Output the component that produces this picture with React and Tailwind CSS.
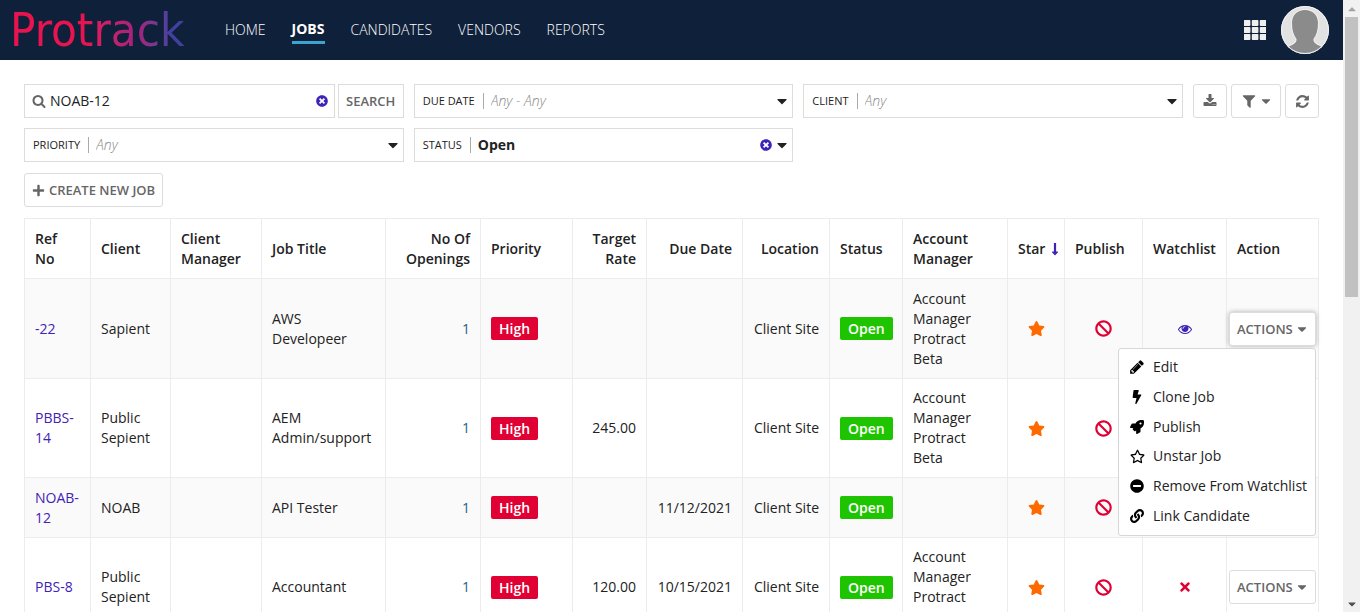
import React from "react";
import {
  FaStar, FaRegStar, FaBan, FaTimes, FaTimesCircle, FaPlus, FaBolt, FaRocket,
  FaMinusCircle, FaLink, FaCaretDown, FaCaretUp, FaLongArrowAltDown,
} from "react-icons/fa";

const glyphs = {
  eye: "M1664 960q-152-236-381-353 61 104 61 225 0 185-131.5 316.5t-316.5 131.5-316.5-131.5-131.5-316.5q0-121 61-225-229 117-381 353 133 205 333.5 326.5t434.5 121.5 434.5-121.5 333.5-326.5zm-720-384q0-20-14-34t-34-14q-125 0-214.5 89.5t-89.5 214.5q0 20 14 34t34 14 34-14 14-34q0-86 61-147t147-61q20 0 34-14t14-34zm848 384q0 34-20 69-140 230-376.5 368.5t-499.5 138.5-499.5-139-376.5-368q-20-35-20-69t20-69q140-229 376.5-368t499.5-139 499.5 139 376.5 368q20 35 20 69z",
  download: "M1344 1344q0-26-19-45t-45-19-45 19-19 45 19 45 45 19 45-19 19-45zm256 0q0-26-19-45t-45-19-45 19-19 45 19 45 45 19 45-19 19-45zm128-224v320q0 40-28 68t-68 28h-1472q-40 0-68-28t-28-68v-320q0-40 28-68t68-28h465l135 136q58 56 136 56t136-56l136-136h464q40 0 68 28t28 68zm-325-569q17 41-14 70l-448 448q-18 19-45 19t-45-19l-448-448q-31-29-14-70 17-39 59-39h256v-448q0-26 19-45t45-19h256q26 0 45 19t19 45v448h256q42 0 59 39z",
  refresh: "M1639 1056q0 5-1 7-64 268-268 434.5t-478 166.5q-146 0-282.5-55t-243.5-157l-129 129q-19 19-45 19t-45-19-19-45v-448q0-26 19-45t45-19h448q26 0 45 19t19 45-19 45l-137 137q71 66 161 102t187 36q134 0 250-65t186-179q11-17 53-117 8-23 30-23h192q13 0 22.5 9.5t9.5 22.5zm25-800v448q0 26-19 45t-45 19h-448q-26 0-45-19t-19-45 19-45l138-138q-148-137-349-137-134 0-250 65t-186 179q-11 17-53 117-8 23-30 23h-199q-13 0-22.5-9.5t-9.5-22.5v-7q65-268 270-434.5t480-166.5q146 0 284 55.5t245 156.5l130-129q19-19 45-19t45 19 19 45z",
  filter: "M1595 295q17 41-14 70l-493 493v742q0 42-39 59-13 5-25 5-27 0-45-19l-256-256q-19-19-19-45v-486l-493-493q-31-29-14-70 17-39 59-39h1280q42 0 59 39z",
  search: "M1216 832q0-185-131.5-316.5t-316.5-131.5-316.5 131.5-131.5 316.5 131.5 316.5 316.5 131.5 316.5-131.5 131.5-316.5zm512 832q0 52-38 90t-90 38q-54 0-90-38l-343-342q-179 124-399 124-143 0-273.5-55.5t-225-150-150-225-55.5-273.5 55.5-273.5 150-225 225-150 273.5-55.5 273.5 55.5 225 150 150 225 55.5 273.5q0 220-124 399l343 343q37 37 37 90z",
  pencil: "M491 1536l91-91-235-235-91 91v107h128v128h107zm523-928q0-22-22-22-10 0-17 7l-542 542q-7 7-7 17 0 22 22 22 10 0 17-7l542-542q7-7 7-17zm-54-192l416 416-832 832h-416v-416zm683 96q0 53-37 90l-166 166-416-416 166-165q36-38 90-38 53 0 91 38l235 234q37 39 37 91z",
};

function Glyph({ name, className }) {
  return (
    <svg viewBox="0 0 1792 1792" fill="currentColor" aria-hidden="true" className={className}>
      <path d={glyphs[name]} />
    </svg>
  );
}

function GridIcon() {
  const cells = [0, 8, 16];
  return (
    <svg viewBox="0 0 22 20" fill="#efefef" className="h-5 w-[22px]" aria-hidden="true">
      {[0, 7, 14].map((y) => cells.map((x) => <rect key={`${x}-${y}`} x={x - 0.2} y={y} width="6.6" height="6" rx="0.8" />))}
    </svg>
  );
}

function Avatar() {
  return (
    <svg viewBox="0 0 48 48" className="size-12" aria-hidden="true">
      <defs>
        <clipPath id="avatar-disc"><circle cx="24" cy="24" r="24" /></clipPath>
      </defs>
      <g clipPath="url(#avatar-disc)">
        <rect width="48" height="48" fill="#e2e2e2" />
        <path d="M24 4C16.500 4 11 9 11 17c0 7 1.500 12 4.500 16 .5 3-2 5-5.500 6.500C8 40.500 6 42 5 44l2 4h34l2-4c-1-2-3-3.500-5-4.500-3.500-1.500-6-3.500-5.500-6.500C35.500 29 37 24 37 17 37 9 31.500 4 24 4z" fill="#8b8b8b" stroke="#f0f0f0" strokeWidth="2" paintOrder="stroke" />
      </g>
      <circle cx="24" cy="24" r="23.500" fill="none" stroke="#f3f3f3" />
    </svg>
  );
}

function Filter({ id, label, value, active }) {
  return (
    <div className="flex h-[34px] items-center border border-[#dcdcdc] bg-white pr-[5px] pl-2">
      <label htmlFor={id} className="mr-[7px] border-r border-[#aaa] pr-2 text-[11px] leading-4 font-medium whitespace-nowrap text-[#222]">
        {label}
      </label>
      <select
        id={id}
        className={`min-w-0 flex-1 appearance-none bg-transparent text-sm leading-5 outline-none ${active ? "font-bold text-[#222]" : "font-light text-[#888] italic"}`}
      >
        <option>{value}</option>
      </select>
      {active && (
        <button type="button" aria-label={`Clear ${label}`} className="mr-[5px] text-[#3f22b8]">
          <FaTimesCircle className="size-3" />
        </button>
      )}
      <FaCaretDown className="h-4 w-[10px] shrink-0 text-[#222]" aria-hidden="true" />
    </div>
  );
}

const toolButton = "flex h-[34px] items-center justify-center rounded-[3px] border border-[#dcdcdc] bg-white text-[#666]";

const columns = [
  ["Ref No", "w-[66px]", "text-left"],
  ["Client", "w-[80px]", "text-left"],
  ["Client Manager", "w-[91px]", "text-left"],
  ["Job Title", "w-[124px]", "text-left"],
  ["No Of Openings", "w-[95px]", "text-right"],
  ["Priority", "w-[92px]", "text-left"],
  ["Target Rate", "w-[74px]", "text-right"],
  ["Due Date", "w-[96px]", "text-right"],
  ["Location", "w-[87px]", "text-right"],
  ["Status", "w-[73px]", "text-left"],
  ["Account Manager", "w-[105px]", "text-left"],
  ["Star", "w-[57px]", "text-left"],
  ["Publish", "w-[78px]", "text-left"],
  ["Watchlist", "w-[84px]", "text-left"],
  ["Action", "w-[92px]", "text-left"],
];

const jobs = [
  { ref: "-22", client: "Sapient", title: "AWS Developeer", rate: "", due: "", manager: "Account Manager Protract Beta", watched: true, open: true },
  { ref: "PBBS-14", client: "Public Sepient", title: "AEM Admin/support", rate: "245.00", due: "", manager: "Account Manager Protract Beta", watched: false },
  { ref: "NOAB-12", client: "NOAB", title: "API Tester", rate: "", due: "11/12/2021", manager: "", watched: false },
  { ref: "PBS-8", client: "Public Sepient", title: "Accountant", rate: "120.00", due: "10/15/2021", manager: "Account Manager Protract Beta", watched: false },
];

const menu = [
  ["Edit", <Glyph name="pencil" className="size-4" />],
  ["Clone Job", <FaBolt className="size-3.5" />],
  ["Publish", <FaRocket className="size-3.5" />],
  ["Unstar Job", <FaRegStar className="size-[15px]" />],
  ["Remove From Watchlist", <FaMinusCircle className="size-3.5" />],
  ["Link Candidate", <FaLink className="size-3.5" />],
];

function ActionMenu() {
  return (
    <div role="menu" className="absolute top-9 right-0 z-10 flex h-[188px] w-[198px] flex-col rounded-[3px] border border-[#d6d6d6] bg-white py-1">
      {menu.map(([label, icon]) => (
        <button key={label} type="button" role="menuitem" className="flex flex-1 items-center gap-2 pl-[10px] text-left text-sm leading-5 whitespace-nowrap text-[#222]">
          <span className="flex w-4 justify-center text-black">{icon}</span>
          {label}
        </button>
      ))}
    </div>
  );
}

const cell = "border border-[#ececec] px-[10px] py-2";

function JobRow({ job }) {
  return (
    <tr className={`odd:bg-[#fafafa] ${job.manager ? "odd:h-[100px] even:h-[99px]" : "h-[60px]"}`}>
      <td className={cell}><a href="#job" className="text-[#3f22b8]">{job.ref}</a></td>
      <td className={cell}>{job.client}</td>
      <td className={cell}></td>
      <td className={cell}>{job.title}</td>
      <td className={`${cell} text-right`}><a href="#openings" className="text-[#1f5f8b]">1</a></td>
      <td className={cell}><span className="inline-block h-[23px] rounded-[2px] bg-[#e00034] px-2 leading-[23px] font-semibold text-white">High</span></td>
      <td className={`${cell} text-right`}>{job.rate}</td>
      <td className={`${cell} text-right`}>{job.due}</td>
      <td className={`${cell} text-right whitespace-nowrap`}>Client Site</td>
      <td className={cell}><span className="inline-block h-[23px] rounded-[2px] bg-[#1fc400] px-2 leading-[23px] font-semibold text-white">Open</span></td>
      <td className={cell}>{job.manager}</td>
      <td className={cell}><FaStar className="mx-auto size-[17px] text-[#ff6a00]" aria-label="Starred" /></td>
      <td className={cell}><FaBan className="mx-auto size-[17px] text-[#e00034]" aria-label="Not published" /></td>
      <td className={cell}>
        {job.watched
          ? <Glyph name="eye" className="mx-auto size-3.5 text-[#3f22b8]" />
          : <FaTimes className="mx-auto size-3.5 text-[#e00034]" aria-label="Not watched" />}
      </td>
      <td className="border border-[#ececec] px-[2px]">
        <div className="relative">
          <button type="button" className={`flex h-[34px] w-full items-center gap-1 rounded-[3px] border border-[#dcdcdc] bg-white pl-[7px] text-[13px] font-semibold text-[#666] ${job.open ? "shadow-[0_0_5px_rgba(0,0,0,0.3)]" : ""}`}>
            ACTIONS
            <FaCaretDown className="h-3.5 w-[10px]" aria-hidden="true" />
          </button>
          {job.open && <ActionMenu />}
        </div>
      </td>
    </tr>
  );
}

export default function App() {
  return (
    <div className="flex h-screen overflow-hidden bg-white font-['Open_Sans',sans-serif] text-sm leading-5 text-[#222]">
      <div className="min-w-0 flex-1 overflow-hidden">
        <header className="flex h-[60px] items-center bg-[#0f203a] pr-[14px] pl-[10px]">
          <a href="#home" className="w-[215px] bg-linear-to-r from-[#e81450] from-35% via-[#a02080] via-60% to-[#42409f] to-75% bg-clip-text font-['DejaVu_Sans_Condensed','DejaVu_Sans',sans-serif] text-[47px] leading-[56px] text-transparent">
            Protrack
          </a>
          <nav className="flex flex-1 items-center gap-[26px] text-white">
            <a href="#home" className="font-light">HOME</a>
            <a href="#jobs" className="border-b-[3px] border-[#3aa6d0] pt-[3px] pb-[2px] font-bold">JOBS</a>
            <a href="#candidates" className="font-light">CANDIDATES</a>
            <a href="#vendors" className="font-light">VENDORS</a>
            <a href="#reports" className="font-light">REPORTS</a>
          </nav>
          <button type="button" aria-label="Apps" className="mr-[15px]"><GridIcon /></button>
          <button type="button" aria-label="Profile"><Avatar /></button>
        </header>

        <main className="px-6 pt-6">
          <form className="flex items-start gap-[10px]" onSubmit={(e) => e.preventDefault()}>
            <div className="grid flex-1 grid-cols-3 gap-[10px]">
              <div className="flex gap-[3px]">
                <div className="flex h-[34px] min-w-0 flex-1 items-center border border-[#dcdcdc] pr-1.5 pl-[7px]">
                  <Glyph name="search" className="mr-1 size-[14px] shrink-0 text-[#666]" />
                  <input type="text" aria-label="Search jobs" defaultValue="NOAB-12" className="min-w-0 flex-1 bg-transparent text-sm outline-none" />
                  <button type="button" aria-label="Clear search" className="text-[#3f22b8]"><FaTimesCircle className="size-3" /></button>
                </div>
                <button type="submit" className="h-[34px] w-[66px] border border-[#dcdcdc] text-[13px] font-semibold text-[#666]">SEARCH</button>
              </div>
              <Filter id="due-date" label="DUE DATE" value="Any - Any" />
              <Filter id="client" label="CLIENT" value="Any" />
              <Filter id="priority" label="PRIORITY" value="Any" />
              <Filter id="status" label="STATUS" value="Open" active />
            </div>
            <div className="flex gap-1">
              <button type="button" aria-label="Download" className={`${toolButton} w-[34px]`}><Glyph name="download" className="size-[14px]" /></button>
              <button type="button" aria-label="Filters" className={`${toolButton} w-[50px] gap-1`}>
                <Glyph name="filter" className="size-4" />
                <FaCaretDown className="h-3.5 w-[10px]" />
              </button>
              <button type="button" aria-label="Refresh" className={`${toolButton} w-[34px]`}><Glyph name="refresh" className="size-[15px]" /></button>
            </div>
          </form>

          <button type="button" className={`${toolButton} mt-[11px] w-[139px] gap-1 text-[13px] font-semibold`}>
            <FaPlus className="size-[13px]" aria-hidden="true" />
            CREATE NEW JOB
          </button>

          <div className="mt-[11px] pr-px">
            <table className="w-full table-fixed border-collapse">
              <thead>
                <tr className="h-[60px]">
                  {columns.map(([name, width, align]) => (
                    <th key={name} scope="col" className={`border border-[#ececec] px-[10px] font-semibold ${width} ${align}`}>
                      {name === "Star" ? (
                        <span className="flex items-center gap-1.5">Star<FaLongArrowAltDown className="h-3.5 w-2 shrink-0 text-[#3f22b8]" /></span>
                      ) : name}
                    </th>
                  ))}
                </tr>
              </thead>
              <tbody>
                {jobs.map((job) => <JobRow key={job.ref} job={job} />)}
              </tbody>
            </table>
          </div>
        </main>
      </div>

      <div className="flex w-[17px] shrink-0 flex-col items-center bg-[#f1f1f1]" aria-hidden="true">
        <div className="flex h-[17px] items-center"><FaCaretUp className="size-3 text-[#a3a3a3]" /></div>
        <div className="h-[280px] w-[13px] bg-[#c1c1c1]" />
        <div className="mt-auto flex h-[17px] items-center"><FaCaretDown className="size-3 text-[#505050]" /></div>
      </div>
    </div>
  );
}
